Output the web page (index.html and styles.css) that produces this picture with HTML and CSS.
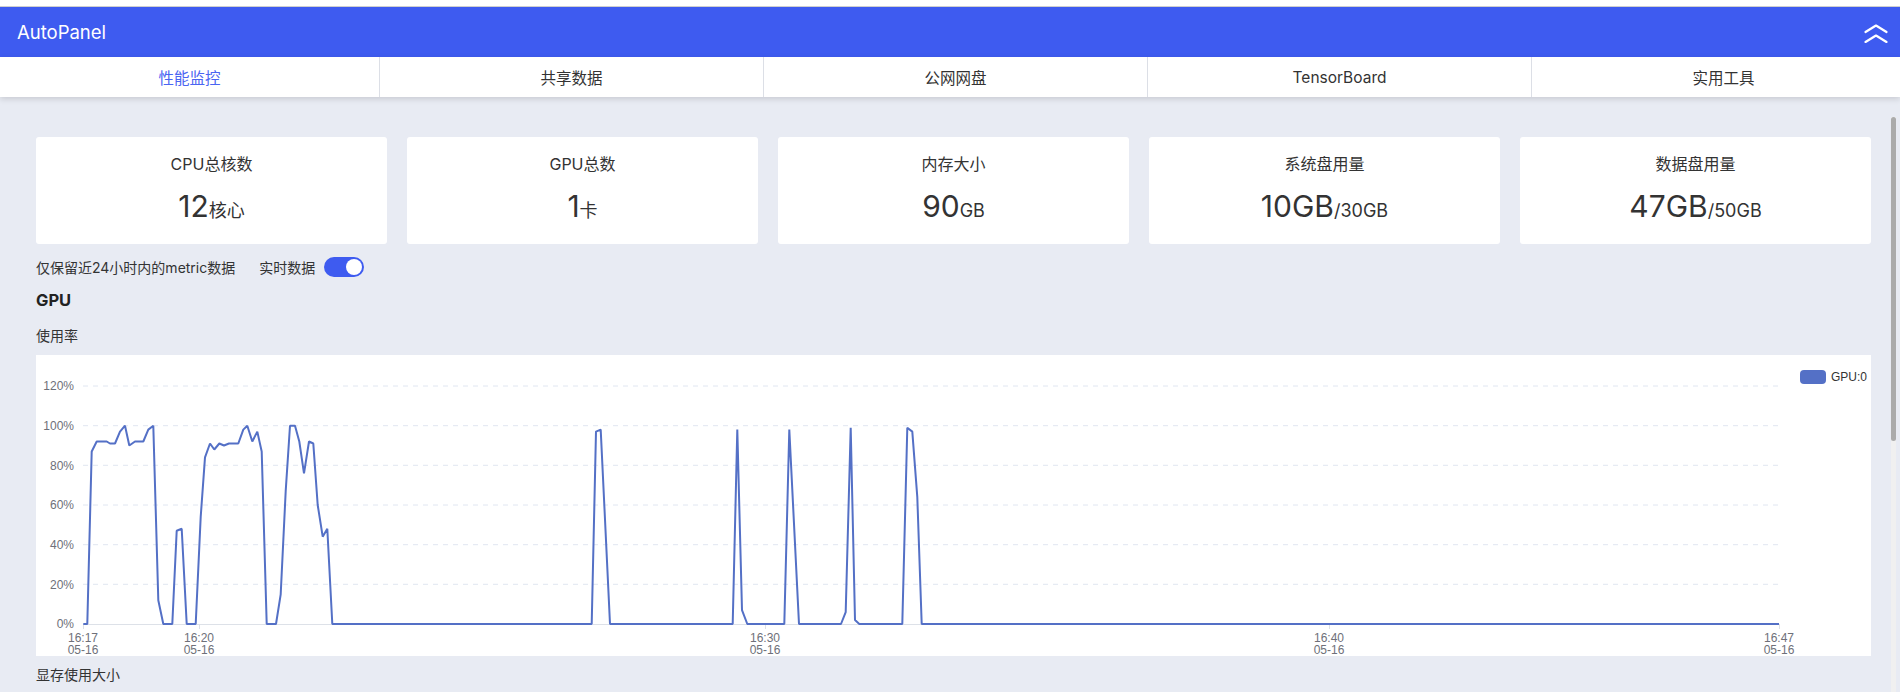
FILE: index.html
```html
<!DOCTYPE html>
<html lang="zh-CN">
<head>
<meta charset="utf-8">
<title>AutoPanel</title>
<link rel="stylesheet" href="styles.css">
</head>
<body>
<div class="topstrip"></div>
<header class="header">
  <div class="brand">AutoPanel</div>
  <svg class="collapse" width="24" height="19" viewBox="0 0 24 19" aria-hidden="true">
    <polyline points="1.5,8 12,1.5 22.5,8" />
    <polyline points="1.5,18 12,11.5 22.5,18" />
  </svg>
</header>
<nav class="tabs">
  <div class="tab active">性能监控</div>
  <div class="tab">共享数据</div>
  <div class="tab">公网网盘</div>
  <div class="tab">TensorBoard</div>
  <div class="tab">实用工具</div>
</nav>
<main class="main">
  <div class="content">
    <section class="cards">
      <div class="card"><div class="card-title">CPU总核数</div><div class="card-value">12<span class="unit">核心</span></div></div>
      <div class="card"><div class="card-title">GPU总数</div><div class="card-value">1<span class="unit">卡</span></div></div>
      <div class="card"><div class="card-title">内存大小</div><div class="card-value">90<span class="unit">GB</span></div></div>
      <div class="card"><div class="card-title">系统盘用量</div><div class="card-value">10GB<span class="unit">/30GB</span></div></div>
      <div class="card"><div class="card-title">数据盘用量</div><div class="card-value">47GB<span class="unit">/50GB</span></div></div>
    </section>
    <div class="options">
      <span class="note">仅保留近24小时内的metric数据</span>
      <span class="realtime">实时数据</span>
      <span class="switch"><span class="knob"></span></span>
    </div>
    <h2 class="section-title">GPU</h2>
    <div class="chart-label">使用率</div>
    <div class="chart">
      <svg width="1835" height="301" viewBox="0 0 1835 301">
        <g class="grid">
          <line x1="47" y1="31" x2="1743" y2="31"/>
          <line x1="47" y1="70.7" x2="1743" y2="70.7"/>
          <line x1="47" y1="110.3" x2="1743" y2="110.3"/>
          <line x1="47" y1="150" x2="1743" y2="150"/>
          <line x1="47" y1="189.7" x2="1743" y2="189.7"/>
          <line x1="47" y1="229.3" x2="1743" y2="229.3"/>
        </g>
        <g class="axis">
          <line x1="47" y1="269.5" x2="1743" y2="269.5"/>
          <line x1="47.5" y1="269" x2="47.5" y2="274"/>
          <line x1="163.5" y1="269" x2="163.5" y2="274"/>
          <line x1="729.5" y1="269" x2="729.5" y2="274"/>
          <line x1="1293.5" y1="269" x2="1293.5" y2="274"/>
          <line x1="1743.5" y1="269" x2="1743.5" y2="274"/>
        </g>
        <g class="ylab">
          <text x="38" y="35.3">120%</text>
          <text x="38" y="75">100%</text>
          <text x="38" y="114.6">80%</text>
          <text x="38" y="154.3">60%</text>
          <text x="38" y="194">40%</text>
          <text x="38" y="233.6">20%</text>
          <text x="38" y="273.3">0%</text>
        </g>
        <g class="xlab">
          <text x="47" y="287">16:17</text><text x="47" y="299">05-16</text>
          <text x="163" y="287">16:20</text><text x="163" y="299">05-16</text>
          <text x="729" y="287">16:30</text><text x="729" y="299">05-16</text>
          <text x="1293" y="287">16:40</text><text x="1293" y="299">05-16</text>
          <text x="1743" y="287">16:47</text><text x="1743" y="299">05-16</text>
        </g>
        <polyline class="series" points="47.3,269 51.3,269 55.7,96.5 60.7,86.5 70.7,86.5 74,88.5 79,88.5 84,76.6 89,70.7 93.3,90.5 99,86.5 107.3,86.5 112.3,74.6 117.3,70.7 122.3,245.2 127.3,269 136.3,269 140.7,175.8 145.7,173.8 150.7,269 159.7,269 164.7,161.9 169,102.4 174,88.5 178.3,94.5 183.3,88.5 188,90.5 193,88.5 202.3,88.5 207.3,74.6 211.3,70.7 216.3,86.5 221.3,76.6 225.7,96.5 230.7,269 240,269 244.7,239.3 249.7,136.1 254,70.7 259,70.7 263.3,86.5 268,118.3 273,86.5 277.3,88.5 281.7,150 286.7,181.7 291.3,173.8 296.3,269 555.7,269 560,76.6 564.7,74.6 574,269 696.7,269 701.3,74.6 706,255.1 711.3,269 748.3,269 753.3,74.6 763,269 805,269 809.7,257.1 814.7,72.7 819,265 823.3,269 866.3,269 871.3,72.7 876.3,76.6 881.3,142.1 885.7,269 1743,269"/>
        <rect class="legend-swatch" x="1764" y="15" width="26" height="14" rx="4"/>
        <text class="legend-text" x="1795" y="26">GPU:0</text>
      </svg>
    </div>
    <div class="chart-label next">显存使用大小</div>
  </div>
  <div class="scrolltrack"><div class="scrollthumb"></div></div>
</main>
</body>
</html>
```
FILE: styles.css
```css
html, body {
  margin: 0;
  padding: 0;
  height: 692px;
  overflow: hidden;
}
body {
  background: #e8ebf3;
  font-family: "Inter", "Noto Sans CJK SC", sans-serif;
  color: #333;
}
.topstrip {
  height: 6px;
  background: #fff;
  border-bottom: 1px solid #cfcfcf;
}
.header {
  height: 50px;
  background: #3e5bf0;
  display: flex;
  align-items: center;
  justify-content: space-between;
  padding: 0 12px 0 17px;
}
.brand {
  color: #fff;
  font-size: 18.5px;
  line-height: 24px;
}
.collapse {
  display: block;
  margin-top: 3px;
}
.collapse polyline {
  fill: none;
  stroke: #fff;
  stroke-width: 2.2;
  stroke-linecap: round;
  stroke-linejoin: round;
}
.tabs {
  position: relative;
  z-index: 2;
  height: 40px;
  background: #fff;
  display: flex;
  overflow: hidden;
  box-shadow: 0 2px 6px rgba(0, 0, 0, 0.14);
}
.tab {
  flex: 0 0 384px;
  display: flex;
  align-items: center;
  justify-content: center;
  font-size: 15.5px;
  color: #333;
  border-left: 1px solid #dcdfe6;
  box-sizing: border-box;
}
.tab:first-child {
  flex-basis: 379px;
  border-left: none;
}
.tab.active {
  color: #4a65f2;
}
.main {
  display: flex;
  height: 595px;
}
.content {
  flex: 1;
  padding: 40px 20px 0 36px;
}
.cards {
  display: grid;
  grid-template-columns: repeat(5, 1fr);
  gap: 20px;
}
.card {
  height: 107px;
  background: #fff;
  border-radius: 3px;
  display: flex;
  flex-direction: column;
  align-items: center;
  box-sizing: border-box;
  padding-top: 16px;
}
.card-title {
  font-size: 16px;
  line-height: 22px;
  color: #333;
}
.card-value {
  margin-top: 13px;
  font-size: 30px;
  line-height: 36px;
  color: #333;
}
.unit {
  font-size: 18px;
}
.options {
  display: flex;
  align-items: center;
  height: 20px;
  margin-top: 13px;
  font-size: 14px;
  color: #333;
}
.realtime {
  margin-left: 24px;
}
.switch {
  margin-left: 9px;
  width: 40px;
  height: 20px;
  border-radius: 10px;
  background: #3e5bf0;
  display: flex;
  align-items: center;
  justify-content: flex-end;
  padding-right: 2px;
  box-sizing: border-box;
}
.knob {
  width: 16px;
  height: 16px;
  border-radius: 50%;
  background: #fff;
}
.section-title {
  margin: 12px 0 0;
  font-size: 16.5px;
  line-height: 22px;
  font-weight: 700;
  color: #222;
}
.chart-label {
  margin-top: 15px;
  font-size: 14px;
  line-height: 20px;
  color: #333;
}
.chart-label.next {
  margin-top: 9px;
}
.chart {
  margin-top: 9px;
  height: 301px;
  background: #fff;
}
.chart svg {
  display: block;
}
.grid line {
  stroke: #e0e6f1;
  stroke-width: 1;
  stroke-dasharray: 5 5;
}
.axis line {
  stroke: #dde1e8;
  stroke-width: 1;
}
.ylab text {
  font-family: "Liberation Sans", sans-serif;
  font-size: 12px;
  fill: #6e7079;
  text-anchor: end;
}
.xlab text {
  font-family: "Liberation Sans", sans-serif;
  font-size: 12px;
  fill: #6e7079;
  text-anchor: middle;
}
.series {
  fill: none;
  stroke: #5470c6;
  stroke-width: 2;
  stroke-linejoin: bevel;
}
.legend-swatch {
  fill: #5470c6;
}
.legend-text {
  font-family: "Liberation Sans", sans-serif;
  font-size: 12px;
  fill: #333;
}
.scrolltrack {
  width: 5px;
  margin: 20px 4px 0 0;
  background: #f0f0f0;
}
.scrollthumb {
  height: 324px;
  background: #ababab;
  border-radius: 3px;
}
```
